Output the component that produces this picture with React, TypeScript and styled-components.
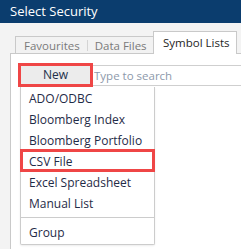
import * as React from 'react';
import styled, { createGlobalStyle } from 'styled-components';

const GlobalStyle = createGlobalStyle`
  html, body {
    margin: 0;
    padding: 0;
    background: #f3f3f3;
  }
  body {
    font-family: 'Open Sans', 'Liberation Sans', sans-serif;
  }
`;

const MENU_ITEMS = [
  'ADO/ODBC',
  'Bloomberg Index',
  'Bloomberg Portfolio',
  'CSV File',
  'Excel Spreadsheet',
  'Manual List',
];

const Window = styled.div`
  width: 241px;
  height: 249px;
  overflow: hidden;
  background: #f3f3f3;
  display: flex;
  flex-direction: column;
`;

const TitleBar = styled.div`
  height: 23px;
  flex: none;
  background: #0b3d6e;
  color: #fff;
  font-size: 13px;
  line-height: 23px;
  padding-left: 10px;
`;

const TabRow = styled.div`
  display: flex;
  align-items: flex-end;
  margin-top: 7px;
  padding-left: 15px;
  height: 23px;
  flex: none;
  position: relative;
  z-index: 1;
  white-space: nowrap;
`;

const TabGroup = styled.div`
  flex: none;
  display: flex;
  align-items: center;
  width: 138px;
  height: 17px;
  box-sizing: border-box;
  border: 1px solid #c9c9c9;
  border-bottom: none;
  border-right: none;
  background: #f2f2f2;
  padding: 1px 0 0 8px;
  font-size: 11.5px;
  color: #7a7a7a;
  gap: 7px;
`;

const Divider = styled.span`
  width: 1px;
  height: 11px;
  background: #d4d4d4;
`;

const ActiveTab = styled.div`
  flex: none;
  height: 23px;
  box-sizing: border-box;
  border: 1px solid #c9c9c9;
  border-bottom: none;
  background: #fff;
  padding-left: 9px;
  width: 84px;
  font-size: 11.5px;
  color: #1e1e1e;
  line-height: 22px;
  margin-bottom: -1px;
`;

const Pane = styled.div`
  flex: 1;
  margin-left: 10px;
  border-left: 1px solid #c9c9c9;
  border-top: 1px solid #c9c9c9;
  background: #fff;
  position: relative;
  padding: 9px 0 0 7px;
`;

const Toolbar = styled.div`
  display: flex;
  align-items: flex-start;
`;

const NewButton = styled.button<{ $marked?: boolean }>`
  flex: none;
  width: 75px;
  height: 24px;
  box-sizing: border-box;
  border: 3px solid ${(p) => (p.$marked ? '#ef4646' : '#c9c9c9')};
  background: #ececec;
  font-family: inherit;
  font-size: 12px;
  color: #22304a;
  padding: 0;
  margin: 0;
  line-height: 18px;
`;

const Search = styled.input`
  flex: 1;
  min-width: 0;
  height: 21px;
  margin-top: 2px;
  box-sizing: border-box;
  border: 1px solid #cfcfcf;
  border-left: none;
  border-right: none;
  font-family: inherit;
  font-size: 11.5px;
  padding: 0 0 0 1px;
  outline: none;
  &::placeholder {
    color: #8d99ab;
  }
`;

const Menu = styled.div`
  position: absolute;
  left: 9px;
  top: 33px;
  width: 135px;
  box-sizing: border-box;
  background: #fff;
  border: 1px solid #cccccc;
  border-top: none;
  border-radius: 0 0 2px 2px;
  box-shadow: 0 1px 2px rgba(0, 0, 0, 0.08);
  padding: 1px 0 1px;
`;

const MenuItem = styled.div<{ $marked?: boolean }>`
  position: relative;
  height: 21px;
  line-height: 21px;
  padding-left: 8px;
  font-size: 12px;
  color: #1f2b47;
  white-space: nowrap;
  &::after {
    content: '';
    display: ${(p) => (p.$marked ? 'block' : 'none')};
    position: absolute;
    left: -1px;
    right: -1px;
    top: -2px;
    bottom: 0;
    border: 3px solid #ef4646;
  }
`;

const Separator = styled.div`
  height: 1px;
  background: #cccccc;
  margin: 3px 0 4px;
`;

export default function App() {
  return (
    <>
      <GlobalStyle />
      <Window>
        <TitleBar>Select Security</TitleBar>
        <TabRow>
          <TabGroup>
            <span>Favourites</span>
            <Divider />
            <span>Data Files</span>
          </TabGroup>
          <ActiveTab>Symbol Lists</ActiveTab>
        </TabRow>
        <Pane>
          <Toolbar>
            <NewButton $marked>New</NewButton>
            <Search placeholder="Type to search" />
          </Toolbar>
          <Menu>
            {MENU_ITEMS.map((item) => (
              <MenuItem key={item} $marked={item === 'CSV File'}>
                {item}
              </MenuItem>
            ))}
            <Separator />
            <MenuItem>Group</MenuItem>
          </Menu>
        </Pane>
      </Window>
    </>
  );
}
